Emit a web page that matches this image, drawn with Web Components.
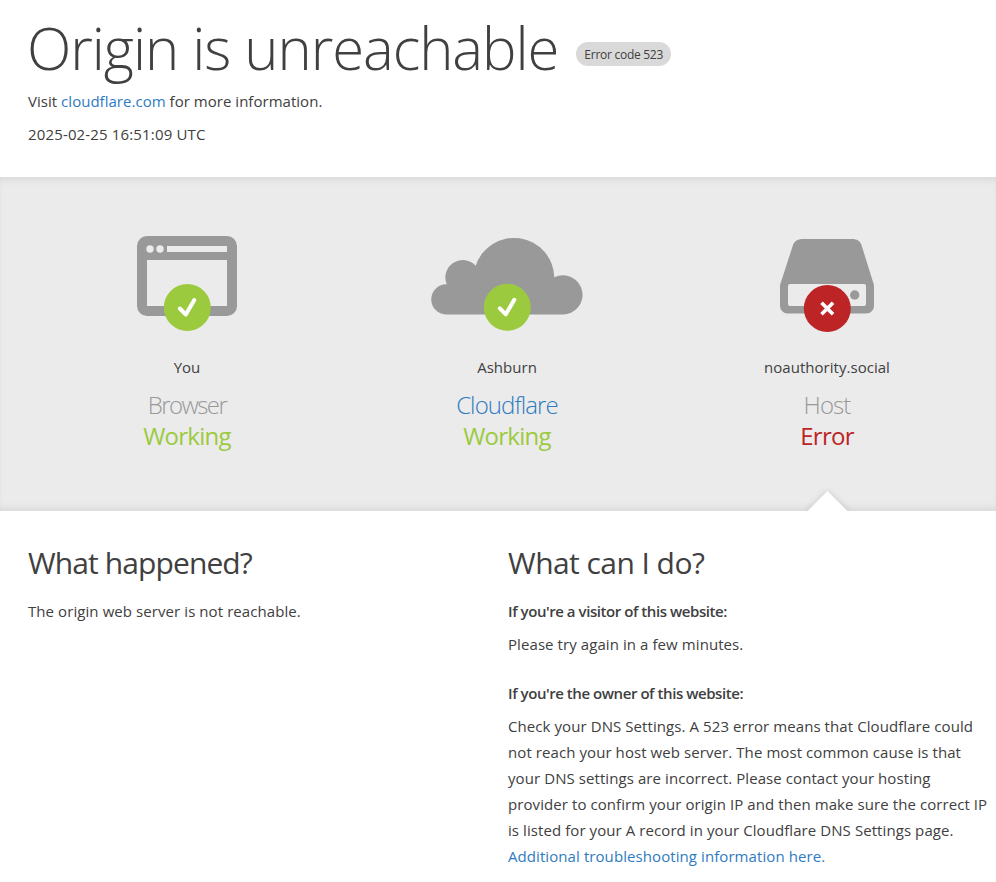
<!DOCTYPE html>
<html lang="en"><head><meta charset="utf-8"><title>Origin is unreachable</title>
<style>
html,body{margin:0;padding:0;background:#fff}
body{font-family:"Open Sans","Noto Sans",sans-serif;color:#404040;font-size:15px}
</style></head><body>
<error-header></error-header>
<status-band></status-band>
<help-section></help-section>
<script>
function def(name, html){
  customElements.define(name, class extends HTMLElement{
    constructor(){super();this.attachShadow({mode:'open'}).innerHTML=html;}
  });
}
const TEXT='font-family:"Open Sans","Noto Sans",sans-serif;';
def('error-header',`<style>
:host{display:block;height:177px;box-sizing:border-box;padding:18px 8px 0 27px;${TEXT}}
.t{display:flex;align-items:center;gap:18px;height:60px}
h1{margin:0;font-size:58px;line-height:60px;font-weight:300;letter-spacing:-1.05px;white-space:nowrap}
.b{font-size:12px;line-height:26px;height:24px;padding:0 8px;border-radius:12px;background:#d9d9d9;margin-top:12px;letter-spacing:-.27px;white-space:nowrap}
p{margin:0 0 0 1px;font-size:15px;line-height:24px;letter-spacing:.03px}
.v{margin-top:11px}.d{margin-top:9px;letter-spacing:.15px}
a{color:#2f7bbf;text-decoration:none}
</style><div class="t"><h1>Origin is unreachable</h1><span class="b">Error code 523</span></div>
<p class="v">Visit <a href="#">cloudflare.com</a> for more information.</p><p class="d">2025-02-25 16:51:09 UTC</p>`);

def('status-item',`<style>
:host{display:flex;flex-direction:column;align-items:center;width:320px;${TEXT}}
.i{height:100px;width:100%;display:flex;justify-content:center;align-items:flex-start}
.n{font-size:15px;line-height:24px;margin-top:19px;letter-spacing:.03px}
.s{font-size:24px;line-height:31px;margin-top:10px;font-weight:300;letter-spacing:-.9px}
.w{font-size:24px;line-height:31px;letter-spacing:-.75px;font-weight:400}
</style><div class="i"><slot></slot></div><div class="n"><slot name="n"></slot></div>
<div class="s"><slot name="s"></slot></div><div class="w"><slot name="w"></slot></div>`);

function ok(x,y){return `<circle cx="${x}" cy="${y}" r="23.5" fill="#9bca3e"/><path d="M${x-7.5} ${y+1}L${x-1.5} ${y+7}L${x+7} ${y-7.5}" fill="none" stroke="#fff" stroke-width="4" stroke-linejoin="round" stroke-linecap="round"/>`}
function bad(x,y){return `<circle cx="${x}" cy="${y}" r="23.5" fill="#bd2426"/><path d="M${x-4.5} ${y-4.5}l9 9M${x+4.5} ${y-4.5}l-9 9" fill="none" stroke="#fff" stroke-width="3.6" stroke-linecap="square"/>`}
const browser=`<svg width="110" height="100" viewBox="0 0 110 100"><path fill-rule="evenodd" fill="#999" d="M15 0h80a10 10 0 0 1 10 10v60a10 10 0 0 1-10 10H15A10 10 0 0 1 5 70V10A10 10 0 0 1 15 0ZM15 24v46h80V24Z"/><circle cx="18" cy="13" r="3.7" fill="#ebebeb"/><circle cx="28" cy="13" r="3.7" fill="#ebebeb"/><rect x="35" y="10" width="60" height="6" fill="#ebebeb"/>${ok(55.3,71.5)}</svg>`;
const cloud=`<svg width="160" height="100" viewBox="0 0 160 100"><path fill="#999" d="M19 78.5A15 15 0 0 1 19.7 48.3A17.5 17.5 0 0 1 48.7 29.7A40.3 40.3 0 0 1 127.3 41.3A19.6 19.6 0 1 1 135.5 78.5Z"/>${ok(80.3,71.3)}</svg>`;
const server=`<svg width="110" height="100" viewBox="0 0 110 100"><path fill-rule="evenodd" fill="#999" d="M31 3H80C85 3 88 5 89.5 9L101 46C102 48 102 50 102 52V70A7.5 7.5 0 0 1 94.5 77.5H15.5A7.5 7.5 0 0 1 8 70V52C8 50 8 48 9 46L21 9C22.5 5 26 3 31 3ZM18 48a2 2 0 0 0-2 2v18a2 2 0 0 0 2 2h74a2 2 0 0 0 2-2V50a2 2 0 0 0-2-2Z"/><circle cx="82.7" cy="59" r="4.7" fill="#999"/>${bad(55.3,72.5)}</svg>`;

def('status-band',`<style>
:host{display:block;position:relative;height:334px;background:#ebebeb;box-shadow:inset 0 7px 9px -5px rgba(0,0,0,.09),inset 0 -7px 9px -5px rgba(0,0,0,.09);overflow:hidden;${TEXT}}
.r{display:flex;padding:59px 9px 0 27px}
.a{position:absolute;left:812.5px;bottom:-14.5px;width:29px;height:29px;transform:rotate(45deg);background:#fff;box-shadow:0 0 7px rgba(0,0,0,.14)}
.g{color:#999}.b{color:#2f7bbf}.w{color:#9bca3e}.e{color:#bd2426}.tight{letter-spacing:-1.6px}
</style><div class="r">
<status-item>${browser}<span slot="n">You</span><span slot="s" class="g tight">Browser</span><span slot="w" class="w">Working</span></status-item>
<status-item>${cloud}<span slot="n">Ashburn</span><span slot="s" class="b">Cloudflare</span><span slot="w" class="w">Working</span></status-item>
<status-item>${server}<span slot="n">noauthority.social</span><span slot="s" class="g">Host</span><span slot="w" class="e">Error</span></status-item>
</div><div class="a"></div>`);

def('help-section',`<style>
:host{display:grid;grid-template-columns:480px 480px;padding:33px 8px 0 28px;${TEXT}}
h2{margin:0;font-size:30px;line-height:38px;font-weight:400}
.q1{letter-spacing:-.9px}.q2{letter-spacing:-.55px}
p{margin:0;font-size:15px;line-height:26px;letter-spacing:.08px}
.h{font-weight:600;letter-spacing:-.44px}
h2+p{margin-top:16px}
.g1{margin-top:7px}.g2{margin-top:23px}.g3{margin-top:7px}
a{color:#2f7bbf;text-decoration:none}
</style><div><h2 class="q1">What happened?</h2><p>The origin web server is not reachable.</p></div>
<div><h2 class="q2">What can I do?</h2><p class="h">If you're a visitor of this website:</p><p class="g1">Please try again in a few minutes.</p>
<p class="h g2">If you're the owner of this website:</p><p class="g3">Check your DNS Settings. A 523 error means that Cloudflare could not reach your host web server. The most common cause is that your DNS settings are incorrect. Please contact your hosting provider to confirm your origin IP and then make sure the correct IP is listed for your A record in your Cloudflare DNS Settings page. <a href="#">Additional troubleshooting information here.</a></p></div>`);
</script></body></html>
